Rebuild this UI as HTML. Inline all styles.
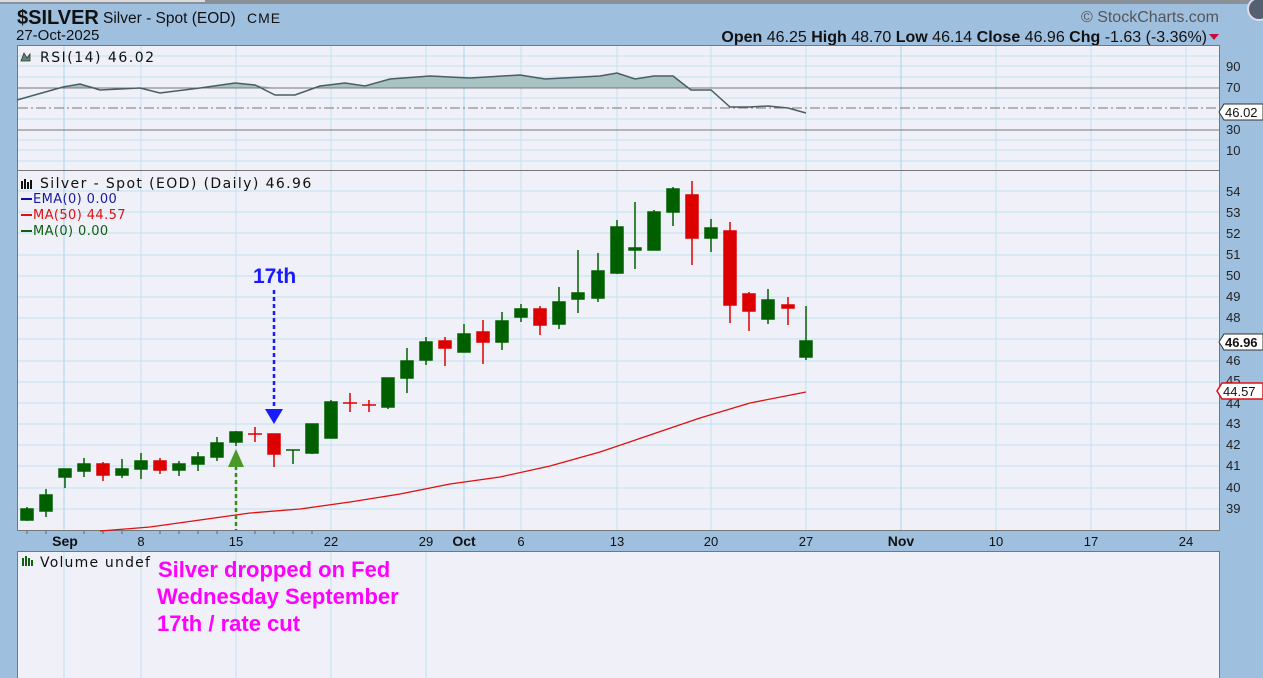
<!DOCTYPE html>
<html><head><meta charset="utf-8"><style>
html,body{margin:0;padding:0;width:1263px;height:678px;overflow:hidden;background:#9fbfdf;}
svg{display:block;font-family:"Liberation Sans",sans-serif;}
</style></head><body>
<svg width="1263" height="678" viewBox="0 0 1263 678" xmlns="http://www.w3.org/2000/svg">
<rect x="0" y="0" width="1263" height="678" fill="#9fbfdf"/>
<rect x="0" y="0" width="1263" height="4" fill="#8a9098"/>
<rect x="0" y="0" width="205" height="2" fill="#d8dce0"/>
<circle cx="1259" cy="9" r="11" fill="#556070" stroke="#dde" stroke-width="2"/>
<text x="17" y="24" font-size="20" font-weight="bold" fill="#111">$SILVER</text>
<text x="103" y="23" font-size="15.5" fill="#111">Silver - Spot (EOD)</text>
<text x="247" y="23" font-size="14" fill="#111" letter-spacing="1">CME</text>
<text x="16" y="40" font-size="15" fill="#111">27-Oct-2025</text>
<text x="1219" y="22" font-size="16" fill="#555" text-anchor="end">© StockCharts.com</text>
<text x="1207" y="42" font-size="16" fill="#111" text-anchor="end"><tspan font-weight="bold">Open</tspan> 46.25  <tspan font-weight="bold">High</tspan> 48.70  <tspan font-weight="bold">Low</tspan> 46.14  <tspan font-weight="bold">Close</tspan> 46.96  <tspan font-weight="bold">Chg</tspan> -1.63 (-3.36%)</text>
<polygon points="1209,34 1219,34 1214,40" fill="#c0103a"/>

<!-- RSI panel -->
<rect x="17.5" y="45.5" width="1202" height="125" fill="#eff0f8" stroke="#777"/>
<g stroke="#bfe3f0" stroke-width="1">
<line x1="18" y1="56" x2="1219" y2="56"/><line x1="18" y1="66" x2="1219" y2="66"/><line x1="18" y1="77" x2="1219" y2="77"/><line x1="18" y1="98" x2="1219" y2="98"/><line x1="18" y1="119" x2="1219" y2="119"/><line x1="18" y1="140" x2="1219" y2="140"/><line x1="18" y1="150" x2="1219" y2="150"/><line x1="18" y1="161" x2="1219" y2="161"/>
</g>
<g stroke="#bfe3f0"><line x1="141" y1="46" x2="141" y2="170"/><line x1="236" y1="46" x2="236" y2="170"/><line x1="331" y1="46" x2="331" y2="170"/><line x1="426" y1="46" x2="426" y2="170"/><line x1="521" y1="46" x2="521" y2="170"/><line x1="617" y1="46" x2="617" y2="170"/><line x1="711" y1="46" x2="711" y2="170"/><line x1="806" y1="46" x2="806" y2="170"/><line x1="901" y1="46" x2="901" y2="170"/><line x1="996" y1="46" x2="996" y2="170"/><line x1="1091" y1="46" x2="1091" y2="170"/><line x1="1186" y1="46" x2="1186" y2="170"/></g>
<g stroke="#a8d4ee"><line x1="64" y1="46" x2="64" y2="170"/><line x1="464" y1="46" x2="464" y2="170"/><line x1="901" y1="46" x2="901" y2="170"/></g>
<polygon fill="#a9c2c4" points="63,88 80,84 100,88 140,88 160,88 200,88 235,83 255,85 275,88 310,88 320,86 345,83 365,86 390,79 430,76 470,78 520,75 545,79 600,76 617,73 635,79 654,76 673,76 689,88"/>
<line x1="18" y1="88" x2="1219" y2="88" stroke="#777"/>
<line x1="18" y1="130" x2="1219" y2="130" stroke="#777"/>
<line x1="18" y1="108" x2="1219" y2="108" stroke="#777" stroke-dasharray="10,3,2,3"/>
<polyline fill="none" stroke="#4a5e62" stroke-width="1.5" points="17,100 63,87 80,84 100,90 140,88 160,93 200,88 235,83 255,85 275,95 295,95 320,86 345,83 365,86 390,79 430,76 470,78 520,75 545,79 600,76 617,73 635,79 654,76 673,76 691,90 711,90 730,107 749,107 768,106 788,108 806,113"/>
<path d="M21,61 l3,-8 3,5 3,-4 v7 h-9z" fill="#5a8a7a" stroke="#333" stroke-width="0.8"/>
<text x="40" y="62" font-size="14" letter-spacing="1.5" fill="#111" font-family="DejaVu Sans,sans-serif">RSI(14) 46.02</text>
<g font-size="13" fill="#222"><text x="1226" y="71">90</text><text x="1226" y="92">70</text><text x="1226" y="134">30</text><text x="1226" y="155">10</text></g>
<polygon points="1219,112 1224,104 1263,104 1263,120 1224,120" fill="#fff" stroke="#333"/>
<text x="1225" y="117" font-size="13" fill="#111">46.02</text>

<!-- Price panel -->
<rect x="17.5" y="170.5" width="1202" height="360" fill="#eff0f8" stroke="#777"/>
<g stroke="#bfe3f0">
<line x1="18" y1="191" x2="1219" y2="191"/><line x1="18" y1="212" x2="1219" y2="212"/><line x1="18" y1="233" x2="1219" y2="233"/><line x1="18" y1="255" x2="1219" y2="255"/><line x1="18" y1="276" x2="1219" y2="276"/><line x1="18" y1="297" x2="1219" y2="297"/><line x1="18" y1="318" x2="1219" y2="318"/><line x1="18" y1="339" x2="1219" y2="339"/><line x1="18" y1="361" x2="1219" y2="361"/><line x1="18" y1="382" x2="1219" y2="382"/><line x1="18" y1="403" x2="1219" y2="403"/><line x1="18" y1="424" x2="1219" y2="424"/><line x1="18" y1="445" x2="1219" y2="445"/><line x1="18" y1="466" x2="1219" y2="466"/><line x1="18" y1="488" x2="1219" y2="488"/><line x1="18" y1="509" x2="1219" y2="509"/>
<line x1="141" y1="171" x2="141" y2="530"/><line x1="236" y1="171" x2="236" y2="530"/><line x1="331" y1="171" x2="331" y2="530"/><line x1="426" y1="171" x2="426" y2="530"/><line x1="521" y1="171" x2="521" y2="530"/><line x1="617" y1="171" x2="617" y2="530"/><line x1="711" y1="171" x2="711" y2="530"/><line x1="806" y1="171" x2="806" y2="530"/><line x1="996" y1="171" x2="996" y2="530"/><line x1="1091" y1="171" x2="1091" y2="530"/><line x1="1186" y1="171" x2="1186" y2="530"/>
</g>
<g stroke="#a8d4ee"><line x1="64" y1="171" x2="64" y2="530"/><line x1="464" y1="171" x2="464" y2="530"/><line x1="901" y1="171" x2="901" y2="530"/></g>
<polyline fill="none" stroke="#e01010" stroke-width="1.3" points="100,531 150,527 200,520 250,513 300,509 350,502 400,494 450,484 500,477 550,466 600,452 650,435 700,418 750,403 806,392"/>

<g stroke-width="1.5">
<g stroke="#006000" fill="#006000">
<line x1="27" y1="507" x2="27" y2="521"/><rect x="21" y="509" width="12" height="11"/>
<line x1="46" y1="489" x2="46" y2="517"/><rect x="40" y="495" width="12" height="16"/>
<line x1="65" y1="469" x2="65" y2="488"/><rect x="59" y="469" width="12" height="8"/>
<line x1="84" y1="458" x2="84" y2="477"/><rect x="78" y="464" width="12" height="7"/>
<line x1="122" y1="459" x2="122" y2="478"/><rect x="116" y="469" width="12" height="6"/>
<line x1="141" y1="453" x2="141" y2="479"/><rect x="135" y="461" width="12" height="8"/>
<line x1="179" y1="461" x2="179" y2="476"/><rect x="173" y="464" width="12" height="6"/>
<line x1="198" y1="452" x2="198" y2="471"/><rect x="192" y="457" width="12" height="7"/>
<line x1="217" y1="437" x2="217" y2="461"/><rect x="211" y="443" width="12" height="14"/>
<line x1="236" y1="431" x2="236" y2="446"/><rect x="230" y="432" width="12" height="10"/>
<line x1="293" y1="450" x2="293" y2="464"/><line x1="286" y1="450" x2="300" y2="450"/>
<line x1="312" y1="424" x2="312" y2="454"/><rect x="306" y="424" width="12" height="29"/>
<line x1="331" y1="400" x2="331" y2="438"/><rect x="325" y="402" width="12" height="36"/>
<line x1="388" y1="378" x2="388" y2="409"/><rect x="382" y="378" width="12" height="29"/>
<line x1="407" y1="348" x2="407" y2="393"/><rect x="401" y="361" width="12" height="17"/>
<line x1="426" y1="337" x2="426" y2="365"/><rect x="420" y="342" width="12" height="18"/>
<line x1="464" y1="324" x2="464" y2="352"/><rect x="458" y="334" width="12" height="18"/>
<line x1="502" y1="312" x2="502" y2="350"/><rect x="496" y="321" width="12" height="21"/>
<line x1="521" y1="304" x2="521" y2="322"/><rect x="515" y="309" width="12" height="8"/>
<line x1="559" y1="287" x2="559" y2="329"/><rect x="553" y="302" width="12" height="22"/>
<line x1="578" y1="250" x2="578" y2="313"/><rect x="572" y="293" width="12" height="6"/>
<line x1="598" y1="253" x2="598" y2="302"/><rect x="592" y="271" width="12" height="27"/>
<line x1="617" y1="220" x2="617" y2="274"/><rect x="611" y="227" width="12" height="46"/>
<line x1="635" y1="202" x2="635" y2="269"/><rect x="629" y="248" width="12" height="2"/>
<line x1="654" y1="210" x2="654" y2="250"/><rect x="648" y="212" width="12" height="38"/>
<line x1="673" y1="187" x2="673" y2="226"/><rect x="667" y="189" width="12" height="23"/>
<line x1="711" y1="219" x2="711" y2="252"/><rect x="705" y="228" width="12" height="10"/>
<line x1="768" y1="289" x2="768" y2="324"/><rect x="762" y="300" width="12" height="19"/>
<line x1="806" y1="306" x2="806" y2="360"/><rect x="800" y="341" width="12" height="16"/>
</g>
<g stroke="#dd0000" fill="#dd0000">
<line x1="103" y1="462" x2="103" y2="481"/><rect x="97" y="464" width="12" height="11"/>
<line x1="160" y1="458" x2="160" y2="474"/><rect x="154" y="461" width="12" height="9"/>
<line x1="255" y1="427" x2="255" y2="442"/><line x1="248" y1="434" x2="262" y2="434"/>
<line x1="274" y1="434" x2="274" y2="467"/><rect x="268" y="434" width="12" height="20"/>
<line x1="350" y1="393" x2="350" y2="412"/><line x1="343" y1="403" x2="357" y2="403"/>
<line x1="369" y1="400" x2="369" y2="412"/><line x1="362" y1="405" x2="376" y2="405"/>
<line x1="445" y1="337" x2="445" y2="366"/><rect x="439" y="341" width="12" height="7"/>
<line x1="483" y1="320" x2="483" y2="364"/><rect x="477" y="332" width="12" height="10"/>
<line x1="540" y1="306" x2="540" y2="335"/><rect x="534" y="309" width="12" height="16"/>
<line x1="692" y1="181" x2="692" y2="265"/><rect x="686" y="195" width="12" height="43"/>
<line x1="730" y1="222" x2="730" y2="323"/><rect x="724" y="231" width="12" height="74"/>
<line x1="749" y1="292" x2="749" y2="331"/><rect x="743" y="294" width="12" height="17"/>
<line x1="788" y1="297" x2="788" y2="325"/><rect x="782" y="305" width="12" height="3"/>
</g>
</g>

<!-- annotations -->
<text x="253" y="283" font-size="21" font-weight="bold" fill="#1a1aff">17th</text>
<line x1="274" y1="290" x2="274" y2="410" stroke="#1a1aff" stroke-width="2.5" stroke-dasharray="4,3"/>
<polygon points="265,409 283,409 274,424" fill="#1a1aff"/>
<line x1="236" y1="466" x2="236" y2="530" stroke="#3a8a20" stroke-width="2.5" stroke-dasharray="4,3"/>
<polygon points="228,467 244,467 236,449" fill="#4a9a2a"/>

<!-- legend -->
<g font-family="DejaVu Sans,sans-serif" font-size="13" letter-spacing="0.4">
<path d="M22,181 v8 M25,179 v10 M28,182 v7 M31,180 v9" stroke="#111" stroke-width="2"/>
<text x="40" y="188" font-size="14" letter-spacing="1.4" fill="#111">Silver - Spot (EOD) (Daily) 46.96</text>
<rect x="21" y="198" width="11" height="2" fill="#1010a0"/><text x="33" y="203" fill="#1a1aa0">EMA(0) 0.00</text>
<rect x="21" y="214" width="11" height="2" fill="#e01010"/><text x="33" y="219" fill="#e01010">MA(50) 44.57</text>
<rect x="21" y="230" width="11" height="2" fill="#106010"/><text x="33" y="235" fill="#106010">MA(0) 0.00</text>
</g>

<g font-size="13" fill="#222">
<text x="1226" y="196">54</text><text x="1226" y="217">53</text><text x="1226" y="238">52</text><text x="1226" y="259">51</text><text x="1226" y="280">50</text><text x="1226" y="301">49</text><text x="1226" y="322">48</text><text x="1226" y="365">46</text><text x="1226" y="385">45</text><text x="1226" y="408">44</text><text x="1226" y="428">43</text><text x="1226" y="449">42</text><text x="1226" y="470">41</text><text x="1226" y="492">40</text><text x="1226" y="513">39</text>
</g>
<polygon points="1219,342 1224,334 1263,334 1263,350 1224,350" fill="#fff" stroke="#333"/>
<text x="1225" y="347" font-size="13" font-weight="bold" fill="#111">46.96</text>
<polygon points="1217,391 1222,383 1263,383 1263,399 1222,399" fill="#fff" stroke="#e01010" stroke-width="1.5"/>
<text x="1223" y="396" font-size="13" fill="#111">44.57</text>

<!-- date axis -->
<g stroke="#666"><line x1="27" y1="531" x2="27" y2="534"/><line x1="46" y1="531" x2="46" y2="534"/><line x1="84" y1="531" x2="84" y2="534"/><line x1="103" y1="531" x2="103" y2="534"/><line x1="122" y1="531" x2="122" y2="534"/><line x1="160" y1="531" x2="160" y2="534"/><line x1="179" y1="531" x2="179" y2="534"/><line x1="198" y1="531" x2="198" y2="534"/><line x1="217" y1="531" x2="217" y2="534"/><line x1="255" y1="531" x2="255" y2="534"/><line x1="274" y1="531" x2="274" y2="534"/><line x1="293" y1="531" x2="293" y2="534"/><line x1="312" y1="531" x2="312" y2="534"/></g>
<g font-size="13" fill="#111" text-anchor="middle">
<text x="65" y="546" font-weight="bold" font-size="14">Sep</text><text x="141" y="546">8</text><text x="236" y="546">15</text><text x="331" y="546">22</text><text x="426" y="546">29</text><text x="464" y="546" font-weight="bold" font-size="14">Oct</text><text x="521" y="546">6</text><text x="617" y="546">13</text><text x="711" y="546">20</text><text x="806" y="546">27</text><text x="901" y="546" font-weight="bold" font-size="14">Nov</text><text x="996" y="546">10</text><text x="1091" y="546">17</text><text x="1186" y="546">24</text>
</g>

<!-- volume panel -->
<rect x="17.5" y="551.5" width="1202" height="130" fill="#eff0f8" stroke="#777"/>
<g stroke="#bfe3f0"><line x1="64" y1="552" x2="64" y2="678"/><line x1="141" y1="552" x2="141" y2="678"/><line x1="236" y1="552" x2="236" y2="678"/><line x1="331" y1="552" x2="331" y2="678"/><line x1="426" y1="552" x2="426" y2="678"/></g>
<path d="M23,558 v8 M26,556 v10 M29,558 v8 M32,560 v6" stroke="#106010" stroke-width="2"/>
<text x="40" y="567" font-size="14" letter-spacing="1.2" fill="#111" font-family="DejaVu Sans,sans-serif">Volume undef</text>
<g font-size="22" font-weight="bold" fill="#ff00ff">
<text x="158" y="577">Silver dropped on Fed</text>
<text x="157" y="604">Wednesday September</text>
<text x="157" y="631">17th / rate cut</text>
</g>
</svg>
</body></html>
